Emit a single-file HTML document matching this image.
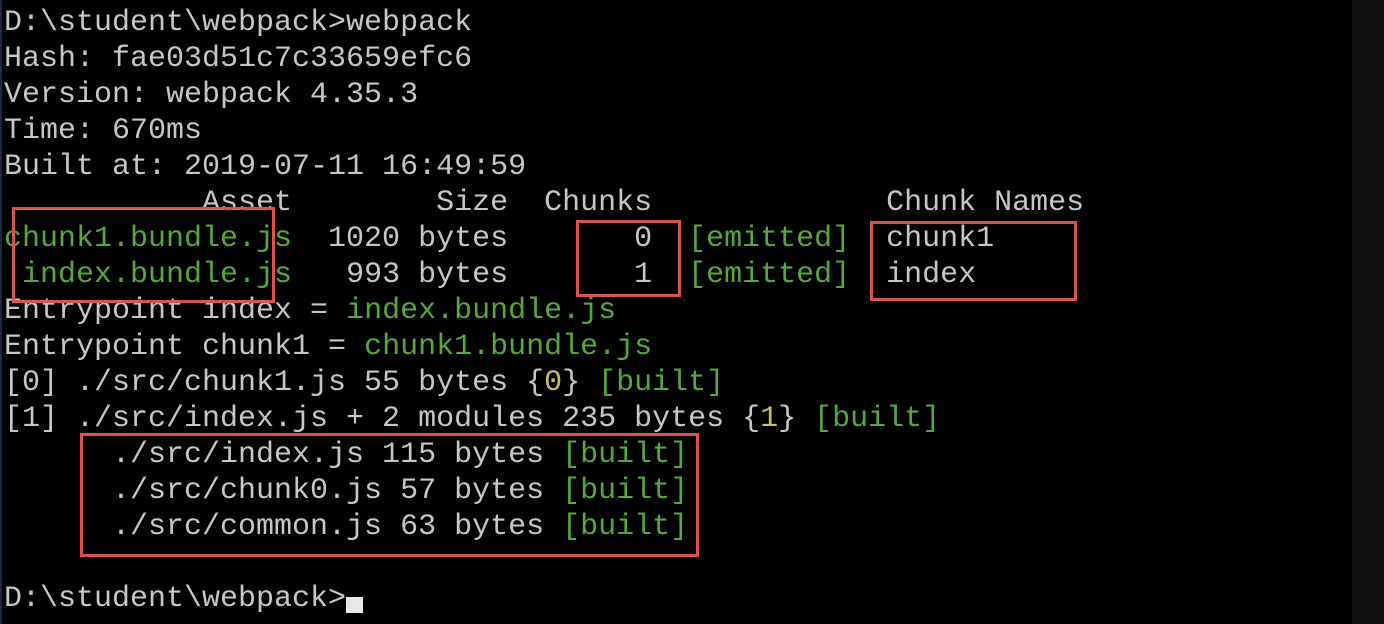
<!DOCTYPE html>
<html><head><meta charset="utf-8"><style>
html,body{margin:0;padding:0;background:#000;width:1384px;height:624px;overflow:hidden;position:relative}
pre{position:absolute;left:4px;top:5px;margin:0;font-family:"Liberation Mono",monospace;font-size:30px;line-height:36px;color:#c6c6c6;letter-spacing:0;white-space:pre}
.g{color:#55a83a}.y{color:#c9c25a}
.box{position:absolute;border:3px solid #d9534f;box-sizing:border-box}
.sb{position:absolute;left:1352px;top:0;width:32px;height:624px;background:#111}
.cur{position:absolute;left:346px;top:597px;width:17px;height:16px;background:#e8e8e8}
.edge{position:absolute;left:0;top:0;width:2px;height:624px;background:#1a2a40}
</style></head><body>
<div class="edge"></div>
<pre>D:\student\webpack&gt;webpack
Hash: fae03d51c7c33659efc6
Version: webpack 4.35.3
Time: 670ms
Built at: 2019-07-11 16:49:59
           Asset        Size  Chunks             Chunk Names
<span class="g">chunk1.bundle.js</span>  1020 bytes       0  <span class="g">[emitted]</span>  chunk1
 <span class="g">index.bundle.js</span>   993 bytes       1  <span class="g">[emitted]</span>  index
Entrypoint index = <span class="g">index.bundle.js</span>
Entrypoint chunk1 = <span class="g">chunk1.bundle.js</span>
[0] ./src/chunk1.js 55 bytes {<span class="y">0</span>} <span class="g">[built]</span>
[1] ./src/index.js + 2 modules 235 bytes {<span class="y">1</span>} <span class="g">[built]</span>
      ./src/index.js 115 bytes <span class="g">[built]</span>
      ./src/chunk0.js 57 bytes <span class="g">[built]</span>
      ./src/common.js 63 bytes <span class="g">[built]</span>

D:\student\webpack&gt;</pre>
<div class="cur"></div>
<div class="box" style="left:12px;top:207px;width:263px;height:96px"></div>
<div class="box" style="left:576px;top:220px;width:105px;height:77px"></div>
<div class="box" style="left:870px;top:221px;width:207px;height:80px"></div>
<div class="box" style="left:80px;top:433px;width:619px;height:124px"></div>
<div class="sb"></div>
</body></html>
